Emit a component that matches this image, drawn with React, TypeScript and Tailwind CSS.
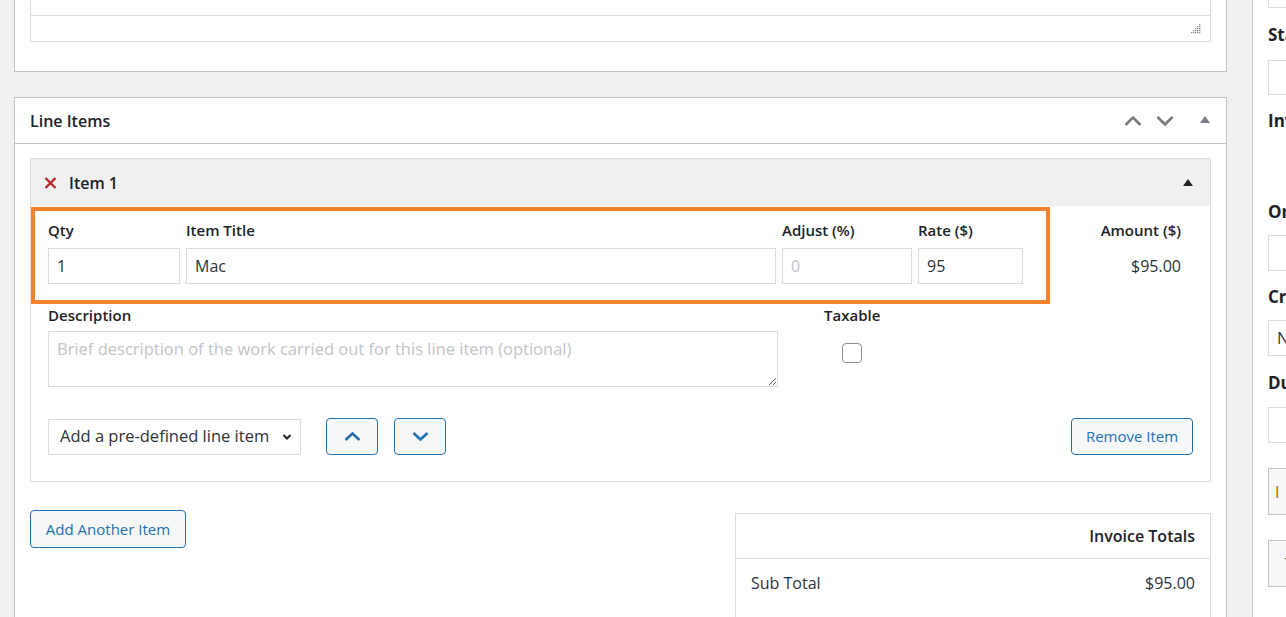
import React from 'react';

const font = "font-['Open_Sans',sans-serif]";

// Chevron used on header and move buttons
const Chevron: React.FC<{ dir: 'up' | 'down'; className?: string; w?: number; h?: number; sw?: number }> = ({
  dir,
  className = '',
  w = 18,
  h = 10,
  sw = 2.6,
}) => (
  <svg width={w} height={h} viewBox={`0 0 ${w} ${h}`} className={className} fill="none" stroke="currentColor" strokeWidth={sw}>
    {dir === 'up' ? (
      <path d={`M1.5 ${h - 1} L${w / 2} 1.5 L${w - 1.5} ${h - 1}`} />
    ) : (
      <path d={`M1.5 1 L${w / 2} ${h - 1.5} L${w - 1.5} 1`} />
    )}
  </svg>
);

const Triangle: React.FC<{ className?: string }> = ({ className = '' }) => (
  <svg width="10" height="7" viewBox="0 0 10 7" className={className} fill="currentColor">
    <path d="M5 0 L10 7 L0 7 Z" />
  </svg>
);

const Grip = () => (
  <svg width="10" height="10" viewBox="0 0 10 10" fill="#8c8f94">
    <rect x="8" y="0" width="1.3" height="1.3" />
    <rect x="6" y="2" width="1.3" height="1.3" />
    <rect x="8" y="2" width="1.3" height="1.3" />
    <rect x="4" y="4" width="1.3" height="1.3" />
    <rect x="6" y="4" width="1.3" height="1.3" />
    <rect x="8" y="4" width="1.3" height="1.3" />
    <rect x="2" y="6" width="1.3" height="1.3" />
    <rect x="4" y="6" width="1.3" height="1.3" />
    <rect x="6" y="6" width="1.3" height="1.3" />
    <rect x="8" y="6" width="1.3" height="1.3" />
    <rect x="0" y="8" width="1.3" height="1.3" />
    <rect x="2" y="8" width="1.3" height="1.3" />
    <rect x="4" y="8" width="1.3" height="1.3" />
    <rect x="6" y="8" width="1.3" height="1.3" />
    <rect x="8" y="8" width="1.3" height="1.3" />
  </svg>
);

const Label: React.FC<{ children: React.ReactNode; className?: string }> = ({ children, className = '' }) => (
  <div className={`text-[15px] leading-[20px] font-semibold text-[#1d2327] whitespace-nowrap ${className}`}>{children}</div>
);

const inputCls =
  'h-[36px] border border-[#dcdcde] bg-white px-[8px] text-[16px] text-[#2c3338] outline-none placeholder-[#c3c4c7]';

const WpButton: React.FC<{ children: React.ReactNode; className?: string }> = ({ children, className = '' }) => (
  <button
    className={`h-[37px] rounded-[4px] border border-[#2271b1] bg-[#f6f7f7] text-[#2271b1] text-[15px] flex items-center justify-center ${className}`}
  >
    {children}
  </button>
);

function Sidebar() {
  const sideLabel = 'text-[17px] leading-[24px] font-bold text-[#1d2327] whitespace-nowrap';
  const sideInput = 'w-[240px] border border-[#dcdcde] bg-white';
  return (
    <div className="flex-1 bg-white border-l border-[#c3c4c7] overflow-hidden pl-[15px]">
      <div className="w-[260px] flex flex-col">
        <div className={`${sideInput} h-[35px] mt-[-27px]`} />
        <div className={`${sideLabel} mt-[15px]`}>Status</div>
        <div className={`${sideInput} h-[35px] mt-[13px]`} />
        <div className={`${sideLabel} mt-[14px]`}>Invoice Number</div>
        <div className={`${sideLabel} mt-[67px]`}>Order Number</div>
        <div className={`${sideInput} h-[36px] mt-[11px]`} />
        <div className={`${sideLabel} mt-[14px]`}>Created</div>
        <div className={`${sideInput} h-[36px] mt-[11px] flex items-center px-[8px] text-[16px] text-[#2c3338]`}>
          November 1, 2023
        </div>
        <div className={`${sideLabel} mt-[15px]`}>Due Date</div>
        <div className={`${sideInput} h-[36px] mt-[12px]`} />
        <div className="w-[240px] h-[47px] mt-[25px] border border-[#c3c4c7] bg-[#f6f7f7] flex items-center pl-[6px] text-[16px] text-[#b26200]">
          I
        </div>
        <div className="w-[240px] h-[47px] mt-[25px] border border-[#c3c4c7] bg-[#f6f7f7] flex items-center pl-[16px] text-[16px] text-[#1d2327]">
          T
        </div>
      </div>
    </div>
  );
}

export default function App() {
  return (
    <div className={`w-[1286px] h-[617px] overflow-hidden bg-[#f0f0f1] flex text-[#1d2327] ${font}`}>
      {/* main column */}
      <div className="w-[1227px] shrink-0 pl-[14px] flex flex-col">
        {/* editor panel (bottom only visible) */}
        <div className="shrink-0 bg-white border-x border-b border-[#c3c4c7] h-[72px] px-[15px]">
          <div className="border-x border-b border-[#dcdcde] h-[42px] flex flex-col">
            <div className="h-[16px] border-b border-[#dcdcde]" />
            <div className="flex-1 flex justify-end items-center pr-[9px]">
              <Grip />
            </div>
          </div>
        </div>

        {/* Line Items panel */}
        <div className="shrink-0 mt-[25px] h-[600px] bg-white border border-[#c3c4c7]">
          <div className="h-[46px] border-b border-[#c3c4c7] flex items-center justify-between pl-[15px] pr-[16px]">
            <h2 className="text-[16px] font-semibold">Line Items</h2>
            <div className="flex items-center text-[#787c82]">
              <Chevron dir="up" />
              <Chevron dir="down" className="ml-[14px]" />
              <Triangle className="ml-[26px] mb-[3px]" />
            </div>
          </div>

          <div className="px-[15px] pt-[14px]">
            {/* Item 1 */}
            <div className="border border-[#dcdcde]">
              <div className="h-[47px] bg-[#f0f0f1] flex items-center justify-between pl-[13px] pr-[17px]">
                <div className="flex items-center">
                  <svg width="13" height="12" viewBox="0 0 13 12" fill="none" stroke="#b32d2e" strokeWidth="2.4">
                    <path d="M1.5 1 L11.5 11 M11.5 1 L1.5 11" />
                  </svg>
                  <span className="ml-[12px] text-[16px] font-semibold">Item 1</span>
                </div>
                <Triangle className="text-[#1d2327]" />
              </div>

              <div className="relative px-[17px] pt-[14px] pb-[26px]">
                {/* highlight annotation */}
                <div className="absolute left-0 top-[1px] w-[1019px] h-[97px] border-[4px] border-[#f6822b] pointer-events-none" />

                <div className="flex gap-[6px]">
                  <div className="w-[132px]">
                    <Label>Qty</Label>
                    <input className={`${inputCls} w-full mt-[8px]`} defaultValue="1" />
                  </div>
                  <div className="w-[590px]">
                    <Label>Item Title</Label>
                    <input className={`${inputCls} w-full mt-[8px]`} defaultValue="Mac" />
                  </div>
                  <div className="w-[130px]">
                    <Label>Adjust (%)</Label>
                    <input className={`${inputCls} w-full mt-[8px]`} placeholder="0" />
                  </div>
                  <div className="w-[105px]">
                    <Label>Rate ($)</Label>
                    <input className={`${inputCls} w-full mt-[8px]`} defaultValue="95" />
                  </div>
                  <div className="flex-1 text-right pr-[12px]">
                    <Label>Amount ($)</Label>
                    <div className="h-[36px] mt-[8px] flex items-center justify-end text-[16px] text-[#2c3338]">$95.00</div>
                  </div>
                </div>

                <div className="flex mt-[21px]">
                  <div className="w-[730px]">
                    <Label>Description</Label>
                    <textarea
                      className="mt-[6px] w-full h-[56px] border border-[#dcdcde] px-[8px] py-[6px] text-[16.5px] leading-[22px] placeholder-[#c3c4c7] outline-none block"
                      placeholder="Brief description of the work carried out for this line item (optional)"
                    />
                  </div>
                  <div className="ml-[46px] flex flex-col items-center">
                    <Label>Taxable</Label>
                    <input
                      type="checkbox"
                      className="appearance-none mt-[18px] w-[20px] h-[20px] rounded-[4px] border border-[#8c8f94] bg-white"
                    />
                  </div>
                </div>

                <div className="flex items-center mt-[31px]">
                  <div className="w-[253px] h-[36px] border border-[#dcdcde] bg-white flex items-center justify-between pl-[11px] pr-[8px] text-[16.5px] text-[#2c3338]">
                    <span>Add a pre-defined line item</span>
                    <Chevron dir="down" w={10} h={6} sw={2} className="text-[#1d2327]" />
                  </div>
                  <WpButton className="w-[52px] ml-[25px]">
                    <Chevron dir="up" w={17} h={9} sw={2.6} />
                  </WpButton>
                  <WpButton className="w-[52px] ml-[16px]">
                    <Chevron dir="down" w={17} h={9} sw={2.6} />
                  </WpButton>
                  <WpButton className="w-[122px] ml-auto">Remove Item</WpButton>
                </div>
              </div>
            </div>

            {/* add + totals */}
            <div className="flex items-start justify-between mt-[28px]">
              <WpButton className="w-[156px] h-[38px] text-[15.5px]">Add Another Item</WpButton>
              <div className="w-[476px] mt-[3px] border border-[#dcdcde]">
                <div className="h-[45px] border-b border-[#dcdcde] flex items-center justify-end pr-[15px] text-[16px] font-semibold">
                  Invoice Totals
                </div>
                <div className="h-[48px] flex items-center justify-between px-[15px] text-[16px] text-[#2c3338]">
                  <span>Sub Total</span>
                  <span>$95.00</span>
                </div>
                <div className="h-[48px]" />
              </div>
            </div>
          </div>
        </div>
      </div>

      {/* gap + sidebar */}
      <div className="w-[25px] shrink-0" />
      <Sidebar />
    </div>
  );
}
